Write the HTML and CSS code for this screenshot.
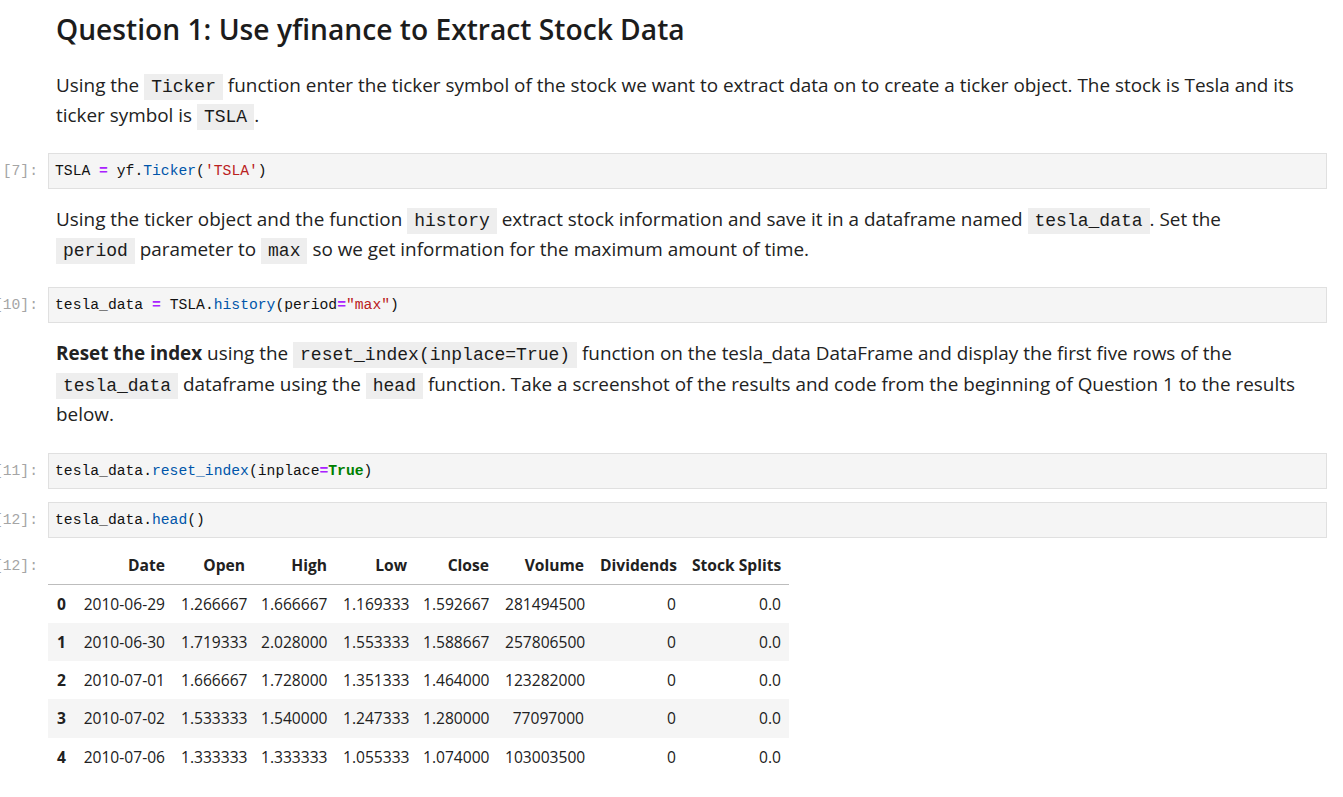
FILE: index.html
```html
<!DOCTYPE html>
<html>
<head>
<meta charset="utf-8">
<link rel="stylesheet" href="styles.css">
</head>
<body>
<div class="notebook">
  <div class="cell md first">
    <div class="prompt"></div>
    <div class="md-body">
      <h2 class="title">Question 1: Use yfinance to Extract Stock Data</h2>
      <p class="para">Using the <code class="ic">Ticker</code> function enter the ticker symbol of the stock we want to extract data on to create a ticker object. The stock is Tesla and its ticker symbol is <code class="ic">TSLA</code>.</p>
    </div>
  </div>

  <div class="cell code">
    <div class="prompt"><span>[7]:</span></div>
    <div class="input"><span class="v">TSLA</span> <span class="op">=</span> <span class="v">yf</span>.<span class="prop">Ticker</span>(<span class="str">'TSLA'</span>)</div>
  </div>

  <div class="cell md">
    <div class="prompt"></div>
    <div class="md-body">
      <p class="para">Using the ticker object and the function <code class="ic">history</code> extract stock information and save it in a dataframe named <code class="ic">tesla_data</code>. Set the <code class="ic">period</code> parameter to <code class="ic">max</code> so we get information for the maximum amount of time.</p>
    </div>
  </div>

  <div class="cell code">
    <div class="prompt"><span>[10]:</span></div>
    <div class="input"><span class="v">tesla_data</span> <span class="op">=</span> <span class="v">TSLA</span>.<span class="prop">history</span>(<span class="v">period</span><span class="op">=</span><span class="str">"max"</span>)</div>
  </div>

  <div class="cell md">
    <div class="prompt"></div>
    <div class="md-body">
      <p class="para p3"><strong>Reset the index</strong> using the <code class="ic">reset_index(inplace=True)</code> function on the tesla_data DataFrame and display the first five rows of the <code class="ic">tesla_data</code> dataframe using the <code class="ic">head</code> function. Take a screenshot of the results and code from the beginning of Question 1 to the results below.</p>
    </div>
  </div>

  <div class="cell code">
    <div class="prompt"><span>[11]:</span></div>
    <div class="input"><span class="v">tesla_data</span>.<span class="prop">reset_index</span>(<span class="v">inplace</span><span class="op">=</span><span class="kw">True</span>)</div>
  </div>

  <div class="cell code tight">
    <div class="prompt"><span>[12]:</span></div>
    <div class="input"><span class="v">tesla_data</span>.<span class="prop">head</span>()</div>
  </div>

  <div class="cell output">
    <div class="prompt out-prompt"><span>[12]:</span></div>
    <div class="out-body">
      <table class="df">
        <colgroup>
          <col class="c-idx"><col class="c-date"><col class="c-open"><col class="c-high"><col class="c-low"><col class="c-close"><col class="c-vol"><col class="c-div"><col class="c-split">
        </colgroup>
        <thead>
          <tr><th></th><th>Date</th><th>Open</th><th>High</th><th>Low</th><th>Close</th><th>Volume</th><th>Dividends</th><th>Stock Splits</th></tr>
        </thead>
        <tbody>
          <tr><th>0</th><td>2010-06-29</td><td>1.266667</td><td>1.666667</td><td>1.169333</td><td>1.592667</td><td>281494500</td><td>0</td><td>0.0</td></tr>
          <tr><th>1</th><td>2010-06-30</td><td>1.719333</td><td>2.028000</td><td>1.553333</td><td>1.588667</td><td>257806500</td><td>0</td><td>0.0</td></tr>
          <tr><th>2</th><td>2010-07-01</td><td>1.666667</td><td>1.728000</td><td>1.351333</td><td>1.464000</td><td>123282000</td><td>0</td><td>0.0</td></tr>
          <tr><th>3</th><td>2010-07-02</td><td>1.533333</td><td>1.540000</td><td>1.247333</td><td>1.280000</td><td>77097000</td><td>0</td><td>0.0</td></tr>
          <tr><th>4</th><td>2010-07-06</td><td>1.333333</td><td>1.333333</td><td>1.055333</td><td>1.074000</td><td>103003500</td><td>0</td><td>0.0</td></tr>
        </tbody>
      </table>
    </div>
  </div>
</div>
</body>
</html>
```

FILE: styles.css
```css
html, body {
  margin: 0;
  padding: 0;
  background: #ffffff;
}
body {
  color: #212121;
  font-family: "Open Sans", "Noto Sans", "DejaVu Sans", sans-serif;
}
.notebook {
  padding: 0 16px 40px 0;
}
.cell {
  display: flex;
  align-items: flex-start;
  margin-top: 13px;
}
.cell.md {
  margin-top: 15px;
}
.cell.first {
  margin-top: 0;
}
.prompt {
  width: 48px;
  flex: none;
  box-sizing: border-box;
  padding-right: 10px;
  display: flex;
  justify-content: flex-end;
  white-space: nowrap;
  font-family: "Liberation Mono", "DejaVu Sans Mono", monospace;
  font-size: 14.7px;
  line-height: 20px;
  color: #a5a5a5;
}
.prompt span {
  flex: none;
}
.code .prompt {
  padding-top: 8px;
}
.md-body {
  flex: 1;
  min-width: 0;
  padding: 0 28px 10px 8px;
}
.first .md-body {
  padding-top: 11px;
}
.title {
  margin: 0 0 23px 0;
  font-size: 28.2px;
  line-height: 36px;
  font-weight: 600;
  color: #1c1c1c;
}
.para {
  margin: 0;
  font-size: 18.9px;
  line-height: 30px;
  color: #222222;
}
.para.p3 {
  line-height: 30.5px;
}
.para strong {
  font-weight: 700;
}
.ic {
  font-family: "Liberation Mono", "DejaVu Sans Mono", monospace;
  font-size: 18px;
  line-height: 1;
  background: #eeeeee;
  padding: 3px 7px;
  color: #1a1a1a;
}
.input {
  flex: 1;
  min-width: 0;
  background: #f5f5f5;
  border: 1px solid #e0e0e0;
  padding: 7px 6px;
  font-family: "Liberation Mono", "DejaVu Sans Mono", monospace;
  font-size: 14.7px;
  line-height: 20px;
  color: #111111;
  white-space: pre;
}
.v { color: #111111; }
.op { color: #aa22ff; font-weight: 700; }
.prop { color: #0055aa; }
.str { color: #ba2121; }
.kw { color: #008000; font-weight: 700; }

.cell.output {
  margin-top: 9px;
}
.out-prompt {
  padding-top: 9px;
}
.out-body {
  flex: 1;
}
.df {
  border-collapse: collapse;
  table-layout: fixed;
  width: 741px;
  font-size: 15.6px;
  color: #212121;
}
.c-idx { width: 26px; }
.c-date { width: 99px; }
.c-open { width: 80px; }
.c-high { width: 82px; }
.c-low { width: 80px; }
.c-close { width: 82px; }
.c-vol { width: 95px; }
.c-div { width: 92px; }
.c-split { width: 105px; }
.df th, .df td {
  text-align: right;
  padding: 0 8px;
  height: 38.25px;
  line-height: 20px;
  white-space: nowrap;
  vertical-align: middle;
}
.df th {
  font-weight: 700;
}
.df thead th {
  border-bottom: 1px solid #bdbdbd;
  height: 37px;
}
.df tbody tr:nth-child(even) {
  background: #f5f5f5;
}
```
